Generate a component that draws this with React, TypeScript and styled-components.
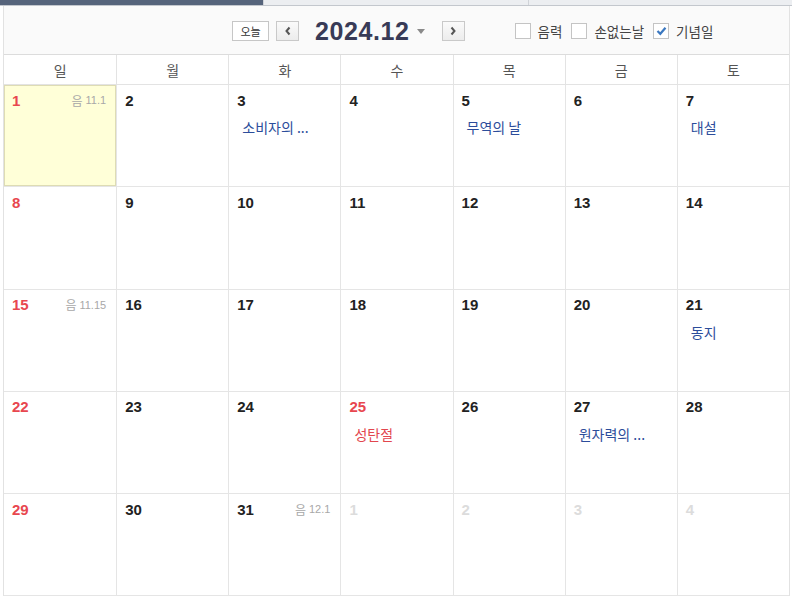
import styled, { createGlobalStyle } from "styled-components";

const GlobalStyle = createGlobalStyle`
  html, body {
    margin: 0;
    padding: 0;
    background: #ffffff;
  }
  body {
    font-family: "Noto Sans CJK KR", "Liberation Sans", sans-serif;
  }
`;

type Cell = {
  day: number;
  other?: boolean;
  lunar?: string;
  event?: string;
  holiday?: boolean;
  today?: boolean;
};

const WEEKDAYS = ["일", "월", "화", "수", "목", "금", "토"];

const WEEKS: Cell[][] = [
  [
    { day: 1, lunar: "11.1", today: true },
    { day: 2 },
    { day: 3, event: "소비자의 ..." },
    { day: 4 },
    { day: 5, event: "무역의 날" },
    { day: 6 },
    { day: 7, event: "대설" },
  ],
  [8, 9, 10, 11, 12, 13, 14].map((d) => ({ day: d })),
  [
    { day: 15, lunar: "11.15" },
    { day: 16 },
    { day: 17 },
    { day: 18 },
    { day: 19 },
    { day: 20 },
    { day: 21, event: "동지" },
  ],
  [
    { day: 22 },
    { day: 23 },
    { day: 24 },
    { day: 25, event: "성탄절", holiday: true },
    { day: 26 },
    { day: 27, event: "원자력의 ..." },
    { day: 28 },
  ],
  [
    { day: 29 },
    { day: 30 },
    { day: 31, lunar: "12.1" },
    { day: 1, other: true },
    { day: 2, other: true },
    { day: 3, other: true },
    { day: 4, other: true },
  ],
];

const App = () => {
  return (
    <Page>
      <GlobalStyle />
      <Tabs>
        <Tab $active />
        <Tab />
        <Tab />
      </Tabs>
      <Calendar>
        <Toolbar>
          <TodayButton>오늘</TodayButton>
          <NavButton aria-label="prev">
            <svg width="8" height="10" viewBox="0 0 8 10">
              <path d="M5.5 1.5 L2.5 5 L5.5 8.5" fill="none" stroke="#555" strokeWidth="2" />
            </svg>
          </NavButton>
          <Title>
            2024.12
            <Caret />
          </Title>
          <NavButton aria-label="next">
            <svg width="8" height="10" viewBox="0 0 8 10">
              <path d="M2.5 1.5 L5.5 5 L2.5 8.5" fill="none" stroke="#555" strokeWidth="2" />
            </svg>
          </NavButton>
          <Options>
            <Option>
              <Box />
              음력
            </Option>
            <Option>
              <Box />
              손없는날
            </Option>
            <Option>
              <Box>
                <svg width="11" height="10" viewBox="0 0 11 10">
                  <path d="M1.5 5 L4.3 7.8 L9.5 1.8" fill="none" stroke="#3b78c0" strokeWidth="2.2" />
                </svg>
              </Box>
              기념일
            </Option>
          </Options>
        </Toolbar>
        <HeadRow>
          {WEEKDAYS.map((w) => (
            <HeadCell key={w}>{w}</HeadCell>
          ))}
        </HeadRow>
        {WEEKS.map((week, i) => (
          <WeekRow key={i}>
            {week.map((c, j) => (
              <DayCell key={j} $today={c.today}>
                <DayTop>
                  <DayNum $sunday={j === 0 || c.holiday} $other={c.other}>
                    {c.day}
                  </DayNum>
                  {c.lunar && (
                    <Lunar>
                      음<LunarNum>{c.lunar}</LunarNum>
                    </Lunar>
                  )}
                </DayTop>
                {c.event && <Event $holiday={c.holiday}>{c.event}</Event>}
              </DayCell>
            ))}
          </WeekRow>
        ))}
      </Calendar>
    </Page>
  );
};

export default App;

const Page = styled.div`
  width: 792px;
  height: 597px;
  overflow: hidden;
`;

const Tabs = styled.div`
  display: flex;
  height: 5px;
  border-bottom: 1px solid #c3c7cd;
`;

const Tab = styled.div<{ $active?: boolean }>`
  width: 263px;
  flex: ${(p) => (p.$active ? "0 0 263px" : "1")};
  background: ${(p) => (p.$active ? "#56647b" : "#eceef1")};
  & + & {
    border-left: 1px solid #d0d3d8;
  }
`;

const Calendar = styled.div`
  margin-left: 3px;
  width: 787px;
  border-left: 1px solid #e2e2e2;
  border-right: 1px solid #e2e2e2;
  box-sizing: border-box;
`;

const Toolbar = styled.div`
  height: 49px;
  background: #fafafa;
  border-bottom: 1px solid #dcdcdc;
  display: flex;
  align-items: center;
  padding-left: 228px;
  padding-top: 2px;
  box-sizing: border-box;
`;

const TodayButton = styled.button`
  width: 37px;
  height: 20px;
  padding: 0;
  border: 1px solid #c6c6c6;
  background: #ffffff;
  font-family: "Noto Sans CJK KR", sans-serif;
  font-size: 11px;
  color: #333;
  line-height: 18px;
`;

const NavButton = styled.button`
  width: 23px;
  height: 20px;
  margin-left: 7px;
  padding: 0;
  border: 1px solid #c9c9c9;
  background: linear-gradient(#fafafa, #ececec);
  display: flex;
  align-items: center;
  justify-content: center;
`;

const Title = styled.div`
  display: flex;
  align-items: center;
  margin: 0 10px 0 16px;
  font-family: "Liberation Sans", Arial, sans-serif;
  font-weight: bold;
  font-size: 25px;
  letter-spacing: 0.6px;
  color: #383b57;
`;

const Caret = styled.span`
  margin-left: 7px;
  margin-top: 1px;
  width: 0;
  height: 0;
  border-left: 4px solid transparent;
  border-right: 4px solid transparent;
  border-top: 5px solid #8a8a8a;
`;

const Options = styled.div`
  display: flex;
  align-items: center;
  margin-left: 50px;
  gap: 9px;
`;

const Option = styled.label`
  display: flex;
  align-items: center;
  gap: 7px;
  font-size: 13.5px;
  color: #444;
`;

const Box = styled.span`
  width: 14px;
  height: 14px;
  border: 1px solid #c4c4c4;
  background: #ffffff;
  display: flex;
  align-items: center;
  justify-content: center;
`;

const HeadRow = styled.div`
  display: grid;
  grid-template-columns: repeat(7, 1fr);
  height: 30px;
  border-bottom: 1px solid #e3e3e3;
  box-sizing: border-box;
`;

const HeadCell = styled.div`
  display: flex;
  align-items: center;
  justify-content: center;
  font-size: 14px;
  color: #555;
  & + & {
    border-left: 1px solid #e3e3e3;
  }
`;

const WeekRow = styled.div`
  display: grid;
  grid-template-columns: repeat(7, 1fr);
  height: 102.3px;
  border-bottom: 1px solid #e5e5e5;
  box-sizing: border-box;
`;

const DayCell = styled.div<{ $today?: boolean }>`
  padding: 6px 10px 0 8px;
  background: ${(p) => (p.$today ? "#ffffd8" : "#ffffff")};
  box-shadow: ${(p) => (p.$today ? "inset 0 0 0 1px #dedcb4" : "none")};
  box-sizing: border-box;
  & + & {
    border-left: 1px solid #e5e5e5;
  }
`;

const DayTop = styled.div`
  display: flex;
  justify-content: space-between;
  align-items: center;
  height: 18px;
`;

const DayNum = styled.span<{ $sunday?: boolean; $other?: boolean }>`
  font-family: "Liberation Sans", Arial, sans-serif;
  font-weight: bold;
  font-size: 15px;
  color: ${(p) => (p.$other ? "#dcdcdc" : p.$sunday ? "#e8474f" : "#222")};
`;

const Lunar = styled.span`
  font-size: 12px;
  color: #a8a8a8;
  display: flex;
  align-items: center;
`;

const LunarNum = styled.span`
  font-family: "Liberation Sans", Arial, sans-serif;
  font-size: 11px;
  margin-left: 3px;
`;

const Event = styled.div<{ $holiday?: boolean }>`
  margin-top: 8px;
  padding-left: 5px;
  font-size: 14px;
  color: ${(p) => (p.$holiday ? "#e2464e" : "#2c4d9b")};
  white-space: nowrap;
`;
